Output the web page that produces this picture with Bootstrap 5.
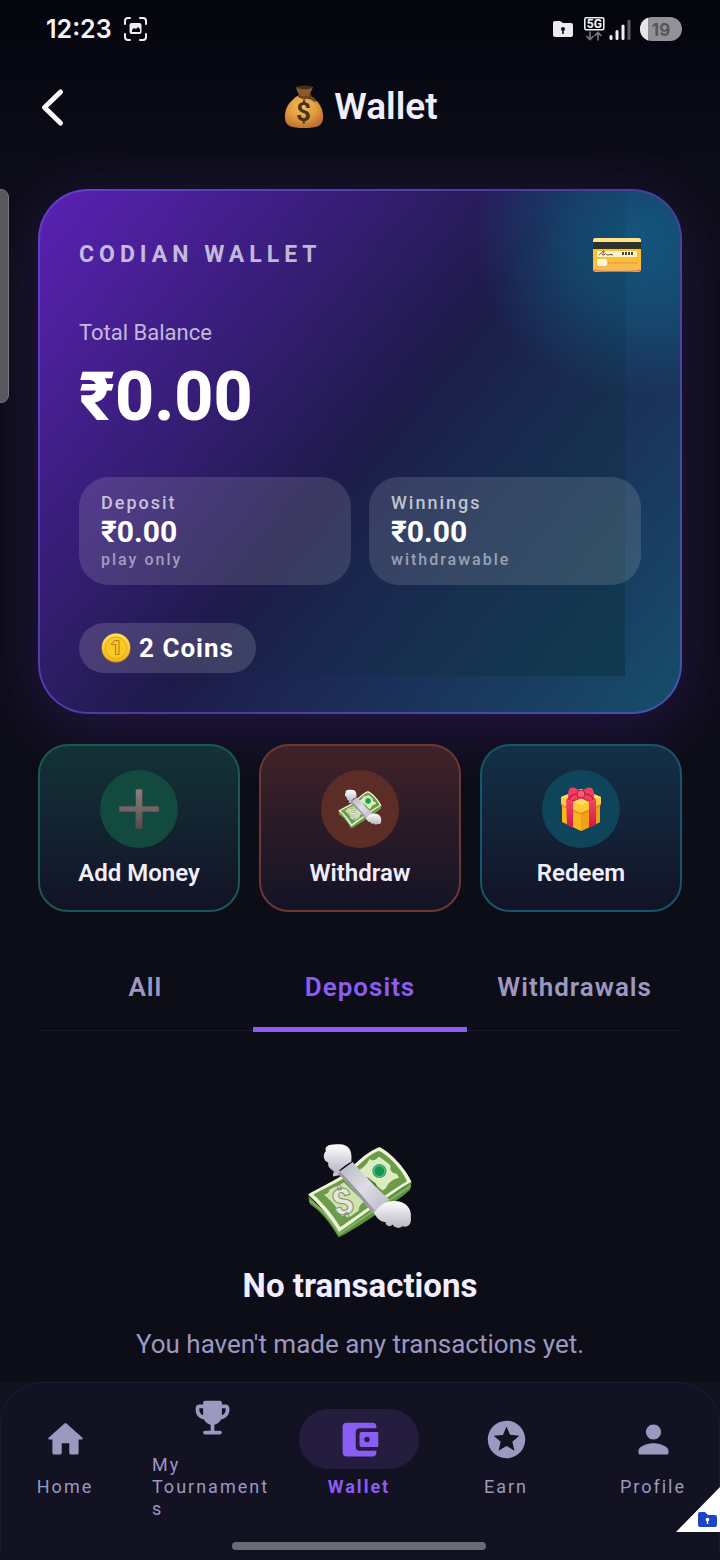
<!DOCTYPE html>
<html lang="en">
<head>
<meta charset="utf-8">
<meta name="viewport" content="width=device-width, initial-scale=1">
<title>Wallet</title>
<link href="https://cdn.jsdelivr.net/npm/bootstrap@5.3.0/dist/css/bootstrap.min.css" rel="stylesheet">
<style>
  body { background: #0d0d18; color: #f1eeff; font-family: Roboto, "Noto Sans", sans-serif; overflow-x: hidden; }
  svg { display: block; flex: none; }
  .topbar { background: linear-gradient(#04040d, #0c0c18); }
  .status-row { padding: 13px 38px 13px 46px; }
  .status-icons { gap: 7px; }
  .clock { font: 600 25px/32px Inter, sans-serif; color: #f4f4f6; }
  .head-row { height: 97px; }
  .head-row h1 { font-size: 37px; line-height: 44px; font-weight: 600; }
  .back-btn { position: absolute; left: 38px; border: 0; background: none; padding: 0; }
  .gutter { padding-left: 38px; padding-right: 38px; }

  .balance { position: relative; margin-top: 34px; padding: 39px; border: 2px solid rgba(112, 88, 225, .55); border-radius: 50px;
    background: linear-gradient(129deg, #5b21b6, #1e1b4b 50%, #164e6b) border-box; box-shadow: 0 14px 64px rgba(124, 58, 237, .22); }
  .tint { position: absolute; inset: 0; border-radius: 48px; overflow: hidden; }
  .tint::before { content: ""; position: absolute; width: 320px; height: 320px; top: -114px; right: -114px;
    background: radial-gradient(circle closest-side, rgba(8, 145, 178, .46), rgba(8, 145, 178, .3) 45%, rgba(8, 145, 178, 0)); }
  .tint::after { content: ""; position: absolute; inset: 0 55px 36px 0;
    background: linear-gradient(129deg, rgba(8, 44, 52, 0) 50%, rgba(8, 44, 52, .45)); }
  .brand { font-size: 23px; line-height: 28px; font-weight: 700; letter-spacing: 5px; color: rgba(255, 255, 255, .7); }
  .brand-row { height: 49px; }
  .total-label { margin-top: 41px; font-size: 22px; line-height: 26px; color: rgba(255, 255, 255, .7); }
  .total { margin-top: 15px; font-size: 68px; line-height: 72px; font-weight: 800; color: #fff; }
  .splits { margin-top: 44px; gap: 18px; }
  .split { flex: 1 1 0; padding: 14px 22px; border-radius: 30px; background: rgba(255, 255, 255, .13); }
  .split-name { font-size: 18px; line-height: 24px; font-weight: 500; letter-spacing: 2px; color: rgba(255, 255, 255, .7); }
  .split-sum { font-size: 30px; line-height: 34px; font-weight: 700; color: #fff; }
  .split-note { font-size: 16px; line-height: 22px; font-weight: 500; letter-spacing: 2px; color: rgba(255, 255, 255, .5); }
  .coins { margin-top: 38px; height: 50px; padding: 0 22px; gap: 8px; border-radius: 25px; background: rgba(255, 255, 255, .15);
    font-size: 26px; line-height: 32px; font-weight: 700; color: #fff; letter-spacing: 1px; }

  .actions { margin-top: 30px; gap: 19px; }
  .action { position: relative; flex: 1 1 0; min-width: 0; padding: 24px 0 23px; border-radius: 30px; border: 2px solid; gap: 11px;
    color: #f1eeff; font-size: 24px; line-height: 28px; font-weight: 600; }
  .disc { width: 78px; height: 78px; border-radius: 50%; }
  .act-add { border-color: #1c5850; background: linear-gradient(#133238, #121326); }
  .act-add .disc { background: #124a40; }
  .act-out { border-color: #6b3834; background: linear-gradient(#402228, #131326); }
  .act-out .disc { background: #5c2c27; }
  .act-gift { border-color: #16566a; background: linear-gradient(#133047, #121326); }
  .act-gift .disc { background: #0f455a; }

  .filter { margin-top: 40px; border-bottom: 1px solid #1b1b2a; }
  .filter button { flex: 1 1 0; border: 0; background: none; padding: 20px 0 25px; margin-bottom: -2px; border-bottom: 5px solid transparent;
    color: #9d98c0; font-size: 26px; line-height: 30px; font-weight: 600; letter-spacing: 1px; }
  .filter button.on { color: #8b5cf6; border-color: #8b5cf6; }

  .empty { padding: 112px 0 16px; }
  .empty h2 { margin: 26px 0 18px; font-size: 33px; line-height: 44px; font-weight: 700; }
  .empty p { font-size: 26px; line-height: 36px; color: #9d98c0; }

  .dock-wrap { background: #11121f; }
  .dock { border: 1px solid #1c1c31; border-bottom: 0; border-radius: 42px 42px 0 0; background: #121222; padding: 4px 6px 0 4px; }
  .dock-item { width: 120px; gap: 7px; color: #9d98c0; text-decoration: none; font-size: 18px; line-height: 22px; letter-spacing: 2px; overflow-wrap: anywhere; }
  .dock-item .pill { width: 120px; height: 60px; border-radius: 30px; }
  .dock-item.on { color: #8b5cf6; font-weight: 700; }
  .dock-item.on .pill { background: #241d3d; }
  .home-bar { width: 36%; height: 8px; border-radius: 4px; background: #6b6b78; margin: 22px auto 10px; }
  .edge-handle { position: absolute; left: -8px; top: 189px; width: 17px; height: 214px; border-radius: 8px; background: #58585f; border: 1px solid #77777c; }
  .corner { position: absolute; right: 0; bottom: 28px; }
</style>
</head>
<body>
<svg width="0" height="0" class="position-absolute" aria-hidden="true">
  <defs>
    <linearGradient id="wing" x1="0" y1="0" x2="0" y2="1"><stop offset="0" stop-color="#fff"/><stop offset="1" stop-color="#b9b6c4"/></linearGradient>
    <linearGradient id="band" x1="0" y1="0" x2="1" y2="1"><stop offset="0" stop-color="#b4b2be"/><stop offset=".5" stop-color="#dedde4"/><stop offset="1" stop-color="#b9b8c4"/></linearGradient>
    <radialGradient id="bag" cx=".45" cy=".35" r=".7"><stop offset="0" stop-color="#f4c168"/><stop offset=".6" stop-color="#dd9637"/><stop offset="1" stop-color="#b86a35"/></radialGradient>
    <linearGradient id="plus" x1="0" y1="0" x2="0" y2="1"><stop offset="0" stop-color="#858281"/><stop offset="1" stop-color="#554b49"/></linearGradient>
    <linearGradient id="plastic" x1="0" y1="0" x2="0" y2="1"><stop offset="0" stop-color="#fcc21b"/><stop offset=".6" stop-color="#fdbf2d"/><stop offset="1" stop-color="#f7b565"/></linearGradient>
    <linearGradient id="ribbon" x1="0" y1="0" x2="0" y2="1"><stop offset="0" stop-color="#f0486a"/><stop offset="1" stop-color="#d3173f"/></linearGradient>
    <linearGradient id="gold" x1="0" y1="0" x2="0" y2="1"><stop offset="0" stop-color="#ffe45c"/><stop offset="1" stop-color="#f6b417"/></linearGradient>
    <symbol id="flying-cash" viewBox="54 68 316 284">
      <path d="M57 224 62 250C96 272 122 306 148 350 172 344 338 232 362 208L366 184 150 320Z" fill="#5f9142"/>
      <path d="M60 240C98 262 126 300 150 340L364 196" fill="none" stroke="#86b565" stroke-width="5"/>
      <path d="M57 222C72 212 138 180 160 164 190 142 222 98 270 80 300 94 346 140 366 184 312 214 184 312 150 334 122 290 90 252 57 222Z" fill="#edf5d6"/>
      <path d="M72 222C100 206 150 184 170 168 198 146 230 106 268 91 294 102 334 142 353 182 300 212 190 296 153 319 128 280 102 248 72 222Z" fill="#6c9c49"/>
      <path d="M104 222C114 221 120 215 121 207L164 186 224 244C212 252 207 262 209 270L181 289C174 280 164 284 158 288 150 268 125 240 104 222Z" fill="#cfe3b0"/>
      <path d="M205 150C220 146 236 128 240 115 250 124 262 118 268 108 280 116 292 124 304 136 298 148 310 160 322 160L329 172C310 176 292 190 291 202L280 210Z" fill="#dcecc0"/>
      <path d="M232 168 260 190 264 204 240 184Z" fill="#4d7a36"/>
      <circle cx="270" cy="152" r="21" fill="#2ca566"/><circle cx="270" cy="152" r="16" fill="#149552" stroke="#87d3a5" stroke-width="2"/>
      <path d="M132 168C128 158 138 148 150 150L160 162Z" fill="#c4c1cd"/>
      <path d="M145 158 190 125C224 164 260 202 300 238 284 250 268 262 248 276 214 232 180 192 145 158Z" fill="url(#band)"/>
      <path d="M145 158C180 192 214 232 248 276L254 268C222 228 186 188 152 153Z" fill="#9997a6"/>
      <path d="M136 156C130 146 114 144 117 126 102 122 100 102 110 92 104 74 126 72 150 72 180 72 190 92 186 124 174 130 160 140 148 152Z" fill="url(#wing)"/>
      <path d="M253 276C268 258 284 242 306 242 344 238 368 262 364 290 366 312 356 322 338 317 330 326 314 322 310 312 300 322 288 314 288 304 276 306 262 294 253 276Z" fill="url(#wing)"/>
      <text x="160" y="282" text-anchor="middle" font-family="Roboto, sans-serif" font-size="110" font-weight="800" transform="rotate(-16 160 244)" fill="#e6e8da" stroke="#84906f" stroke-width="3">$</text>
    </symbol>
  </defs>
</svg>

<div class="position-relative min-vh-100 d-flex flex-column">
  <header class="topbar">
    <div class="status-row d-flex align-items-center">
      <span class="clock">12:23</span>
      <svg class="ms-2" width="32" height="32" viewBox="0 0 32 32" fill="none" stroke="#eeeef2" stroke-width="2" stroke-linecap="round"><path d="M5 11V8a3 3 0 0 1 3-3h2M20 5h3a3 3 0 0 1 3 3v3M26 21v3a3 3 0 0 1-3 3h-3M10 27H8a3 3 0 0 1-3-3v-3"/><rect x="10.500" y="11" width="10" height="9" rx="1" fill="#eeeef2"/><path d="M12 19v-2l2-2 2 1 2-2 2 2v3z" fill="#08080f" stroke="none"/></svg>
      <div class="status-icons ms-auto d-flex align-items-center">
        <svg width="22" height="20" viewBox="0 0 22 20"><path d="M1 4a2 2 0 0 1 2-2h5l3 2h8a2 2 0 0 1 2 2v10a2 2 0 0 1-2 2H3a2 2 0 0 1-2-2z" fill="#ececf0"/><circle cx="11" cy="10" r="2" fill="#111"/><path d="M10.200 10h1.600v5h-1.600z" fill="#111"/></svg>
        <svg width="52" height="26" viewBox="0 0 52 26"><rect x="3.800" y="1.800" width="19" height="12" rx="1.500" fill="none" stroke="#eeeef2" stroke-width="1.600"/><text x="13.300" y="11.800" text-anchor="middle" font-family="Roboto, sans-serif" font-size="12" font-weight="700" fill="#f4f4f6">5G</text><g fill="none" stroke="#77777d" stroke-width="1.600"><path d="M9 15.500v8M5.500 20 9 23.500l3.500-3.500M17 24.500v-8M13.500 20 17 16.500l3.500 3.500"/></g><g stroke-width="3" stroke-linecap="round" stroke="#eeeef2"><path d="M30 20.500v2M36 15.500v7M42 10v12.500"/><path stroke="#5d5d63" d="M48 5v17.500"/></g></svg>
        <svg width="42" height="26" viewBox="0 0 42 26"><clipPath id="batt"><rect x="0" y="1" width="42" height="24" rx="12"/></clipPath><g clip-path="url(#batt)"><path fill="#929296" d="M0 0h42v26H0z"/><path fill="#e6e6ea" d="M0 0h8v26H0z"/></g><text x="21" y="19.500" text-anchor="middle" font-family="Inter, sans-serif" font-size="17" font-weight="700" fill="#55555b">19</text></svg>
      </div>
    </div>
    <div class="head-row position-relative d-flex align-items-center justify-content-center">
      <button class="back-btn" aria-label="Back"><svg width="32" height="44" viewBox="0 0 32 44" fill="none" stroke="#fafaff" stroke-width="5" stroke-linecap="round" stroke-linejoin="round"><path d="M22.500 7 6.500 22.500 22.500 38"/></svg></button>
      <svg class="me-2" width="44" height="48" viewBox="0 0 44 48"><path d="M17 12C7 18 2 26 3 36c1 7 6 9 19 9s18-2 19-9c1-10-4-18-14-24z" fill="url(#bag)"/><path d="M14 4c1 6 4 8 4 10h9c1-4 2-5 4-10-4 0-5-2-8-1-3-1-5 1-9 1z" fill="#8c5a2c"/><path d="M14 4c4 0 5-2 9-1 3-1 5 1 8 1-3 3-13 3-17 0z" fill="#4a2d16"/><path d="M17 13c3 2 8 3 11 0 0 3 4 4 5 5M24 14c3 2 5 1 8 2" fill="none" stroke="#694119" stroke-width="2.200" stroke-linecap="round"/><text x="21.500" y="38" text-anchor="middle" font-family="Roboto, sans-serif" font-size="26" font-weight="700" fill="#4b3211">$</text></svg>
      <h1 class="m-0">Wallet</h1>
    </div>
  </header>

  <main class="gutter flex-grow-1">
    <section class="balance">
      <div class="tint"></div>
      <div class="position-relative">
        <div class="brand-row d-flex align-items-center justify-content-between">
          <span class="brand">CODIAN WALLET</span>
          <svg width="48" height="34" viewBox="0 0 48 34"><rect width="48" height="34" rx="3" fill="url(#plastic)"/><path d="M0 5V3a3 3 0 0 1 3-3h42a3 3 0 0 1 3 3v2z" fill="#ffe289"/><path d="M0 4h48v7H0z" fill="#2f312c"/><path d="M4 13h40v6H4z" fill="#fff3ce"/><path d="M6 17c2-1 4-5 5-4s-3 4-1 4 2-2 3-1 1 1 2 1 2-1 5 0" fill="none" stroke="#4b4738" stroke-width="1"/><path d="M29 15.500h12" stroke="#4b4738" stroke-width="3" stroke-dasharray="2 1"/><rect x="4" y="21" width="10" height="7" rx="2" fill="#fff5dc"/><path d="M15 25h29" stroke="#e0a53e" stroke-width="2" stroke-dasharray="2 1"/><path d="M1 32c1 2 45 2 46 0" stroke="#c97032" fill="none"/></svg>
        </div>
        <div class="total-label">Total Balance</div>
        <div class="total">₹0.00</div>
        <div class="splits d-flex">
          <div class="split"><div class="split-name">Deposit</div><div class="split-sum">₹0.00</div><div class="split-note">play only</div></div>
          <div class="split"><div class="split-name">Winnings</div><div class="split-sum">₹0.00</div><div class="split-note">withdrawable</div></div>
        </div>
        <div class="coins d-inline-flex align-items-center">
          <svg width="30" height="30" viewBox="0 0 30 30"><circle cx="15" cy="15" r="14.500" fill="#d98e12"/><circle cx="15" cy="14.500" r="14" fill="url(#gold)"/><circle cx="15" cy="14.800" r="11" fill="#f9c825" stroke="#e6ad1d" stroke-width="1"/><path d="M10.500 10.500l3.500-3h4v14h-3.500v-10h-4z" fill="#f3c42c" stroke="#b87a14" stroke-width="1"/></svg>
          <span>2 Coins</span>
        </div>
      </div>
    </section>

    <div class="actions d-flex">
      <button class="action act-add d-flex flex-column align-items-center">
        <span class="disc d-flex align-items-center justify-content-center"><svg width="42" height="42" viewBox="0 0 42 42"><path d="M18.500 1h5a1 1 0 0 1 1 1v16h15.500a1 1 0 0 1 1 1v4a1 1 0 0 1-1 1H24.500v16a1 1 0 0 1-1 1h-5a1 1 0 0 1-1-1V24H2a1 1 0 0 1-1-1v-4a1 1 0 0 1 1-1h15.500V2a1 1 0 0 1 1-1z" fill="url(#plus)" stroke="#3f4541" stroke-width=".8"/></svg></span>
        <span>Add Money</span>
      </button>
      <button class="action act-out d-flex flex-column align-items-center">
        <span class="disc d-flex align-items-center justify-content-center"><svg width="44" height="40"><use href="#flying-cash"/></svg></span>
        <span>Withdraw</span>
      </button>
      <button class="action act-gift d-flex flex-column align-items-center">
        <span class="disc d-flex align-items-center justify-content-center"><svg width="42" height="44" viewBox="0 0 42 44"><path d="M2 13v22l19 9 19-9V13z" fill="#fbb51e"/><path d="M21 20v24l19-9V13z" fill="#f59f18"/><path d="M1 10 21 2l20 8v7l-20 9L1 17z" fill="#ffc93a"/><path d="M1 10 21 2l20 8-20 8z" fill="#ffdc62"/><path d="M1 17l20 9 20-9v2l-20 9L1 19z" fill="#d98712" opacity=".6"/><path d="M6 12l7 3v26l-6-3zM29 15l7-3v26l-7 3z" fill="url(#ribbon)"/><path d="M6 12 18 7l6 3-11 5zM36 12 25 7l-7 3 11 5z" fill="#e02d50"/><path d="M21 5C16 0 10-1 9 3c-1 3-2 7 0 9 3 2 8 0 12-3 4 3 9 5 12 3 2-2 1-6 0-9-1-4-7-3-12 2z" fill="#ef4063"/><path d="M9 12c1-4 5-5 10-5M33 12c-1-4-5-5-10-5" fill="none" stroke="#b8163c" stroke-width="1.200"/><circle cx="21" cy="7" r="4" fill="#f25b78" stroke="#be1a3f"/></svg></span>
        <span>Redeem</span>
      </button>
    </div>

    <div class="filter d-flex" role="tablist">
      <button role="tab">All</button>
      <button role="tab" class="on" aria-selected="true">Deposits</button>
      <button role="tab">Withdrawals</button>
    </div>

    <section class="empty text-center">
      <svg class="mx-auto" width="106" height="95"><use href="#flying-cash"/></svg>
      <h2>No transactions</h2>
      <p class="m-0">You haven't made any transactions yet.</p>
    </section>
  </main>

  <div class="dock-wrap mt-auto">
    <nav class="dock">
      <div class="d-flex justify-content-between align-items-center">
        <a href="#" class="dock-item d-flex flex-column align-items-center"><span class="pill d-flex align-items-center justify-content-center"><svg width="45" height="45" viewBox="0 0 24 24" fill="currentColor"><path d="M10 19v-5h4v5c0 .55.45 1 1 1h3c.55 0 1-.45 1-1v-7h1.700c.46 0 .68-.57.33-.87L12.670 3.600c-.38-.34-.96-.34-1.340 0l-8.360 7.530c-.34.3-.13.87.33.87H5v7c0 .55.45 1 1 1h3c.55 0 1-.45 1-1z"/></svg></span><span>Home</span></a>
        <a href="#" class="dock-item d-flex flex-column align-items-center"><span class="pill d-flex align-items-center justify-content-center"><svg width="45" height="45" viewBox="0 0 24 24" fill="currentColor"><path d="M19 5h-2V4c0-.55-.45-1-1-1H8c-.55 0-1 .45-1 1v1H5c-1.100 0-2 .9-2 2v1c0 2.550 1.920 4.630 4.390 4.940.63 1.500 1.980 2.630 3.610 2.960V19H8c-.55 0-1 .45-1 1s.45 1 1 1h8c.55 0 1-.45 1-1s-.45-1-1-1h-3v-3.100c1.630-.33 2.980-1.460 3.610-2.960C19.080 12.630 21 10.550 21 8V7c0-1.100-.9-2-2-2zM5 8V7h2v3.820C5.840 10.400 5 9.300 5 8zm14 0c0 1.300-.84 2.400-2 2.820V7h2v1z"/></svg></span><span>My Tournaments</span></a>
        <a href="#" class="dock-item on d-flex flex-column align-items-center" aria-current="page"><span class="pill d-flex align-items-center justify-content-center"><svg width="45" height="45" viewBox="0 0 24 24" fill="currentColor"><path d="M10 16V8c0-1.100.89-2 2-2h9V5c0-1.100-.9-2-2-2H5c-1.110 0-2 .9-2 2v14c0 1.100.89 2 2 2h14c1.100 0 2-.9 2-2v-1h-9c-1.110 0-2-.9-2-2zm3-8c-.55 0-1 .45-1 1v6c0 .55.45 1 1 1h9V8h-9zm3 5.500c-.83 0-1.500-.67-1.500-1.500s.67-1.500 1.500-1.500 1.500.67 1.500 1.500-.67 1.500-1.500 1.500z"/></svg></span><span>Wallet</span></a>
        <a href="#" class="dock-item d-flex flex-column align-items-center"><span class="pill d-flex align-items-center justify-content-center"><svg width="45" height="45" viewBox="0 0 24 24" fill="currentColor"><path d="M11.990 2C6.470 2 2 6.480 2 12s4.470 10 9.990 10C17.520 22 22 17.520 22 12S17.520 2 11.990 2zm4.240 16L12 15.450 7.770 18l1.120-4.810-3.730-3.230 4.920-.42L12 5l1.920 4.530 4.920.42-3.730 3.230L16.230 18z"/></svg></span><span>Earn</span></a>
        <a href="#" class="dock-item d-flex flex-column align-items-center"><span class="pill d-flex align-items-center justify-content-center"><svg width="45" height="45" viewBox="0 0 24 24" fill="currentColor"><path d="M12 12c2.210 0 4-1.790 4-4s-1.790-4-4-4-4 1.790-4 4 1.790 4 4 4zm0 2c-2.670 0-8 1.340-8 4v1c0 .55.45 1 1 1h14c.55 0 1-.45 1-1v-1c0-2.660-5.330-4-8-4z"/></svg></span><span>Profile</span></a>
      </div>
      <div class="home-bar"></div>
    </nav>
  </div>

  <div class="edge-handle"></div>
  <svg class="corner" width="44" height="46" viewBox="0 0 44 46"><path d="M44 1v45H0z" fill="#fff"/><path d="M22 28a2 2 0 0 1 2-2h5l3 3h7a2 2 0 0 1 2 2v8a2 2 0 0 1-2 2H24a2 2 0 0 1-2-2z" fill="#1b45c8"/><circle cx="31.500" cy="33.500" r="1.800" fill="#fff"/><path d="M30.800 34h1.400v4h-1.400z" fill="#fff"/></svg>
</div>
<script src="https://cdn.jsdelivr.net/npm/bootstrap@5.3.0/dist/js/bootstrap.bundle.min.js"></script>
</body>
</html>
